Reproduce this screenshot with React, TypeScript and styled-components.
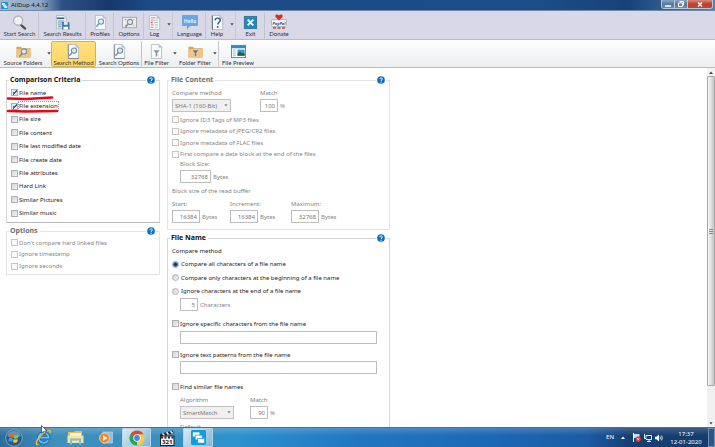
import React from "react";
import styled, { createGlobalStyle, css } from "styled-components";

const GlobalStyle = createGlobalStyle`
  *, *::before, *::after { box-sizing: border-box; }
  html, body, #root { height: 100%; }
  body { margin: 0; overflow: hidden; background: #fff; }
  body, button, input, select {
    font-family: "Noto Sans", "Open Sans", sans-serif;
    font-size: 6px;
    line-height: 8px;
    color: #222;
  }
  svg { display: block; }
`;

const Window = styled.div`
  display: flex;
  flex-direction: column;
  height: 100vh;
`;

/* ---------- title bar ---------- */

const TitleBar = styled.header`
  display: flex;
  align-items: flex-start;
  height: 11px;
  flex: none;
  background: linear-gradient(90deg, #a3b8d0 0, #8fa9c6 40px, #2c5283 62px, #16396b 110px, #1c4b86 150px, #1c4d88 75%, #174377 88%, #5680ab 100%);
  border-bottom: 1px solid #6f87a8;
`;

const AppTitle = styled.h1`
  display: flex;
  align-items: center;
  gap: 3px;
  margin: 0;
  padding: 1px 0 0 1px;
  font-size: 6px;
  line-height: 8px;
  font-weight: 400;
  color: #0b1420;
  flex: 1;
`;

const CaptionButtons = styled.div`
  display: flex;
  margin-right: 2px;
  border: 1px solid #b8c8da;
  border-top: 0;
  border-radius: 0 0 3px 3px;
  overflow: hidden;
`;

const CaptionButton = styled.button<{ $close?: boolean }>`
  display: grid;
  place-items: center;
  width: ${(p) => (p.$close ? 24 : 13)}px;
  height: 8px;
  padding: 0;
  border: 0;
  border-right: ${(p) => (p.$close ? "0" : "1px solid #b8c8da")};
  background: ${(p) =>
    p.$close ? "linear-gradient(#d98a80, #b8402f 50%, #c8442f)" : "linear-gradient(#8ea8c4, #54789f 50%, #6b8db2)"};
`;

/* ---------- toolbars ---------- */

const Toolbar = styled.nav<{ $light?: boolean }>`
  display: flex;
  flex: none;
  height: ${(p) => (p.$light ? 28 : 29)}px;
  background: ${(p) => (p.$light ? "linear-gradient(#fefefe, #eceef0)" : "#d9d8e6")};
  border-bottom: 1px solid #bcbcc0;
  padding-top: 1px;
`;

const Tool = styled.button<{ $w: number; $active?: boolean; $sep?: boolean }>`
  display: flex;
  flex-direction: column;
  align-items: center;
  flex: none;
  width: ${(p) => p.$w}px;
  padding: 1px 0 0;
  border: 1px solid transparent;
  background: none;
  white-space: nowrap;
  color: #33333c;
  ${(p) =>
    p.$sep &&
    css`
      border-right-color: #c3c3cf;
    `}
  ${(p) =>
    p.$active &&
    css`
      border-color: #d9b04c;
      border-radius: 2px;
      background: linear-gradient(#ffe07e, #ffd662);
    `}
`;

const ToolIcon = styled.span`
  display: grid;
  place-items: center;
  width: 16px;
  height: 16px;
  flex: none;
`;

const ToolLabel = styled.span`
  font-family: Lato, "Open Sans", sans-serif;
  line-height: 8px;
`;

const DropArrow = styled.button<{ $w: number; $sep?: boolean }>`
  display: grid;
  place-items: start center;
  flex: none;
  width: ${(p) => p.$w}px;
  padding: 11px 0 0;
  border: 0;
  border-right: ${(p) => (p.$sep ? "1px solid #c9c9d2" : "0")};
  background: none;
`;

/* ---------- body ---------- */

const Body = styled.main`
  display: flex;
  flex: 1;
  min-height: 0;
  background: #fff;
`;

const Content = styled.div`
  display: grid;
  grid-template-columns: minmax(0, 154fr) minmax(0, 223fr);
  column-gap: 7px;
  align-items: start;
  flex: 0 1 390px;
  padding: 7px 0 0 6px;
  overflow: hidden;
  height: 100%;
`;

const Spacer = styled.div`
  flex: 1;
`;

const Column = styled.div`
  display: flex;
  flex-direction: column;
`;

const Group = styled.section<{ $muted?: boolean }>`
  margin-top: 5px;
  padding-bottom: 2px;
  color: ${(p) => (p.$muted ? "#858585" : "#222")};
  border: 1px solid ${(p) => (p.$muted ? "#e4e4e4" : "#d6d6d6")};
  border-bottom-color: ${(p) => (p.$muted ? "#e0e0e0" : "#b8b8b8")};
`;

const GroupHead = styled.div`
  display: flex;
  align-items: center;
  justify-content: space-between;
  height: 10px;
  margin-top: -6px;
  padding: 0 3px 0 2px;
`;

const GroupTitle = styled.h2<{ $muted?: boolean }>`
  margin: 0;
  padding: 0 2px 0 1px;
  background: #fff;
  font-family: "Open Sans", "Noto Sans", sans-serif;
  font-size: 7px;
  line-height: 10px;
  font-weight: 700;
  white-space: nowrap;
  color: ${(p) => (p.$muted ? "#6e6e6e" : "#111")};
`;

const HelpButton = styled.button`
  display: grid;
  place-items: center;
  padding: 0 1px;
  border: 0;
  background: #fff;
`;

const CheckGrid = styled.div<{ $h: number }>`
  display: grid;
  grid-auto-rows: 1fr;
  align-items: center;
  height: ${(p) => p.$h}px;
  padding-left: 4px;
`;

const OptionLabel = styled.label`
  position: relative;
  display: flex;
  align-items: center;
  gap: 1px;
  line-height: 8px;
  white-space: nowrap;
`;

const OptionText = styled.span<{ $focus?: boolean }>`
  outline: ${(p) => (p.$focus ? "1px dotted #999" : "none")};
`;

const Box = styled.input`
  appearance: none;
  flex: none;
  width: 7px;
  height: 7px;
  margin: 0;
  border: 1px solid #b0b0b4;
  background: linear-gradient(135deg, #d2d3d6, #f4f4f4);

  &:disabled {
    border-color: #c6c6c6;
    background: #fafafa;
  }
  &[type="radio"] {
    border-radius: 50%;
    margin-right: 1px;
  }
  &[type="radio"]:checked {
    border-color: #8fa3b6;
    background: radial-gradient(circle, #103a63 0 1px, #3a7aae 2px, #dbe6ee 3px);
  }
  &[type="checkbox"]:checked {
    background:
      linear-gradient(#5573a4, #5573a4) 1px 2px / 1px 2px no-repeat,
      linear-gradient(135deg, transparent 38%, #3c5c92 38% 62%, transparent 62%) 1px 0 / 4px 5px no-repeat,
      #e2e8f0;
  }
`;

const RedStroke = styled.svg`
  position: absolute;
  left: -5px;
  top: 6px;
  z-index: 1;
  pointer-events: none;
`;

const Stack = styled.div<{ $indent?: boolean }>`
  display: flex;
  flex-direction: column;
  align-items: flex-start;
  padding: 0 12px 0 ${(p) => (p.$indent ? 12 : 4)}px;
`;

const Line = styled.div<{ $h: number }>`
  display: flex;
  align-items: center;
  width: 100%;
  height: ${(p) => p.$h}px;
`;

const FieldRow = styled.div<{ $cols: string; $indent?: boolean }>`
  display: grid;
  grid-template-columns: ${(p) => p.$cols};
  padding-left: ${(p) => (p.$indent ? 12 : 4)}px;
`;

const Field = styled.div`
  display: flex;
  flex-direction: column;
  align-items: flex-start;
  gap: 2px;
`;

const FieldLabel = styled.label`
  line-height: 8px;
  white-space: nowrap;
`;

const Inline = styled.div`
  display: flex;
  align-items: center;
  gap: 2px;
  color: #858585;
`;

const TextBox = styled.input<{ $w?: number }>`
  width: ${(p) => (p.$w ? `${p.$w}px` : "100%")};
  height: 13px;
  padding: 0 2px;
  border: 1px solid #bdbdbd;
  background: #fff;
  color: #777;
  text-align: right;
  outline: none;
`;

const SelectWrap = styled.span<{ $w: number }>`
  position: relative;
  display: block;
  width: ${(p) => p.$w}px;
  & > svg {
    position: absolute;
    right: 3px;
    top: 5px;
    pointer-events: none;
  }
`;

const Select = styled.select`
  appearance: none;
  display: block;
  width: 100%;
  height: 13px;
  padding: 0 0 0 2px;
  border: 1px solid #c2c2c2;
  border-radius: 0;
  background: #f0f0f0;
  color: #777;
  opacity: 1;
`;

/* ---------- scroll bar ---------- */

const ScrollBar = styled.div`
  display: flex;
  flex-direction: column;
  width: 8px;
  flex: none;
  background: #f0f0f0;
`;

const ScrollArrow = styled.button`
  display: grid;
  place-items: center;
  height: 8px;
  padding: 0;
  border: 0;
  background: #f2f2f2;
`;

const ScrollTrack = styled.div`
  flex: 1;
  display: grid;
  grid-template-rows: 310fr 33fr;
`;

const ScrollThumb = styled.div`
  display: grid;
  place-items: center;
  border: 1px solid #a9a9a9;
  border-radius: 1px;
  background: linear-gradient(90deg, #f6f6f6, #e2e2e2 45%, #c4c4c6);
`;

/* ---------- task bar ---------- */

const TaskBar = styled.footer`
  display: flex;
  align-items: stretch;
  flex: none;
  height: 20px;
  border-top: 1px solid #4d6e8c;
  background: linear-gradient(rgba(255, 255, 255, 0.18), rgba(255, 255, 255, 0) 40%),
    linear-gradient(90deg, #2c6f9f 0, #3f90bd 8%, #398fc0 22%, #2d92cd 33%, #2277c0 50%, #1d68b4 68%, #1b5ca4 82%, #153f73 88%, #143c6c 100%);
  color: #fff;
`;

const TaskButton = styled.button<{ $w: number; $open?: boolean }>`
  display: grid;
  place-items: center;
  width: ${(p) => p.$w}px;
  flex: none;
  padding: 0;
  border: 1px solid ${(p) => (p.$open ? "#b7d6e8" : "transparent")};
  border-radius: 1px;
  background: ${(p) => (p.$open ? "linear-gradient(135deg, #d9ebf4, #7fb6d6)" : "none")};
`;

const Tray = styled.div`
  display: flex;
  align-items: center;
  gap: 1px;
  margin-left: auto;
`;

const TrayIcons = styled.div`
  display: flex;
  align-items: center;
  gap: 3px;
  padding-right: 1px;
`;

const Expander = styled.button`
  display: grid;
  place-items: center;
  width: 12px;
  height: 12px;
  padding: 0;
  border: 0;
  background: none;
`;

const Language = styled.span`
  padding: 0 2px 2px 0;
`;

const Clock = styled.time`
  width: 42px;
  text-align: center;
  line-height: 8px;
`;

const ShowDesktop = styled.button`
  width: 7px;
  align-self: stretch;
  padding: 0;
  border: 1px solid #6d8fb4;
  background: #2a578a;
`;

const Pointer = styled.svg`
  position: fixed;
  left: 41px;
  bottom: 12px;
  z-index: 5;
  pointer-events: none;
`;

/* ---------- icons ---------- */

const Down = ({ color = "#444" }: { color?: string }) => (
  <svg width="4" height="3" viewBox="0 0 4 3" aria-hidden="true">
    <path d="M.3.3h3.400L2 2.400z" fill={color} />
  </svg>
);

const Logo = ({ size }: { size: number }) => (
  <svg width={size} height={size} viewBox="0 0 16 16" aria-hidden="true">
    <rect width="16" height="16" rx="1.500" fill="#159bdc" />
    <rect x="2" y="2.500" width="7" height="4.500" fill="#fff" />
    <path d="M4.500 5.500h7.500v5h-7.500z" fill="#fff" stroke="#159bdc" strokeWidth=".8" />
    <path d="M7 9h7.500v5H7z" fill="#fff" stroke="#159bdc" strokeWidth=".8" />
  </svg>
);

const Help = () => (
  <svg width="8" height="8" viewBox="0 0 16 16" aria-hidden="true">
    <circle cx="8" cy="8" r="7.700" fill="#0b70c4" />
    <path d="M5.500 6.200C5.500 3 10.700 3 10.700 6c0 2-2.600 2-2.600 4" fill="none" stroke="#fff" strokeWidth="1.900" />
    <circle cx="8.100" cy="12.300" r="1.200" fill="#fff" />
  </svg>
);

const Page = () => (
  <>
    <path d="M2.500.5h8l3 3v12h-11z" fill="#f6f9fb" stroke="#a9b2ba" strokeWidth=".8" />
    <path d="M10.500.5v3h3z" fill="#c8d0d6" stroke="#a9b2ba" strokeWidth=".6" />
  </>
);

const Lens = ({ x = 0, y = 0, color = "#6f9cc0" }: { x?: number; y?: number; color?: string }) => (
  <g transform={`translate(${x} ${y})`}>
    <circle cx="8.500" cy="7" r="2.800" fill="#dcebf6" stroke={color} strokeWidth="1.200" />
    <path d="M6.500 9.200L4 12" stroke={color} strokeWidth="1.600" strokeLinecap="round" />
  </g>
);

const Folder = () => (
  <>
    <path d="M.5 3h5l1 1.500h9V14.500H.5z" fill="#d9a557" />
    <path d="M.5 5.500h15v9H.5z" fill="#f2c680" />
  </>
);

const Funnel = ({ color = "#8b8f94" }: { color?: string }) => (
  <path d="M4.500 6.500h7L9 9.500V13l-2 .8V9.500z" fill={color} stroke="#fff" strokeWidth=".4" />
);

const drawings: Record<string, React.ReactNode> = {
  search: (
    <>
      <path d="M9.500 10.500l4.500 4" stroke="#4c4e52" strokeWidth="2.400" strokeLinecap="round" />
      <circle cx="6.500" cy="6" r="4.900" fill="#eef0f3" stroke="#b2b3b8" strokeWidth="1.400" />
      <path d="M3.800 5.500C4.300 3.800 6 3 7.500 3.400" fill="none" stroke="#fff" strokeWidth="1.200" />
    </>
  ),
  results: (
    <>
      <path d="M1.500.5h8l2.500 2.500v11.500H1.500z" fill="#eef3f6" stroke="#9aa8b2" strokeWidth=".7" />
      <path d="M2 3.500h8" stroke="#2c6a94" strokeWidth="1.800" />
      <path d="M3 6.500h7M3 8.500h7M3 10.500h4M3 12.500h4" stroke="#5e7e94" strokeWidth=".9" />
      <path d="M7.500 7.500h7l1 1v7h-8z" fill="#3d79a8" />
      <path d="M9.500 7.500h4v3h-4z" fill="#e6eef4" />
      <path d="M9 12.500h5v3H9z" fill="#fff" />
    </>
  ),
  profiles: <><Page /><Lens /></>,
  options: (
    <>
      <rect x=".5" y="2.500" width="15" height="11" fill="#ededf0" stroke="#a5a6ab" />
      <path d="M3 5h2M3 11h2M12 5h1M12 11h1" stroke="#999" />
      <Lens y={0.5} color="#8a8f96" />
    </>
  ),
  log: (
    <>
      <Page />
      <path d="M4 3h5M4 5.500h3M4 10.500h3M4 13h3" stroke="#d77a6f" strokeWidth="1" />
      <path d="M4 8h2" stroke="#d8433a" strokeWidth="1.600" />
      <path d="M7.500 5.500h4M7.500 8h4M8.500 10.500h3M8.500 13h3" stroke="#aeb4ba" strokeWidth="1" />
    </>
  ),
  help: (
    <>
      <Page />
      <path d="M2.500.5v15" stroke="#54687a" />
      <path d="M5.500 5.500C5.500 2.600 11 2.500 11 5.500c0 2.200-2.800 2.200-2.800 4.700" fill="none" stroke="#24587e" strokeWidth="1.500" />
      <circle cx="8.200" cy="12.700" r="1" fill="#24587e" />
    </>
  ),
  exit: (
    <>
      <rect x="1.500" y="1.500" width="13" height="13" fill="#1a8cbe" stroke="#3a7391" />
      <path d="M5 5l6 6M11 5l-6 6" stroke="#fff" strokeWidth="2" />
    </>
  ),
  method: (
    <>
      <Page />
      <path d="M2.500.5v15h11" fill="none" stroke="#7b8791" />
      <Lens color="#7291ab" />
    </>
  ),
  source: <><Folder /><Lens y={1} color="#7c8f9e" /></>,
  filefilter: <><Page /><Funnel /></>,
  folderfilter: <><Folder /><Funnel color="#7b6d5b" /></>,
  preview: (
    <>
      <rect x=".5" y="1.500" width="15" height="13" fill="#f5fafc" stroke="#4591b5" />
      <path d="M0 3h16" stroke="#2d8ec0" strokeWidth="3" />
      <path d="M2 6.500h3M2 8.500h3M2 10.500h3M2 12.500h3" stroke="#8ab2c8" strokeWidth=".8" />
      <rect x="7" y="6" width="7.500" height="6.500" fill="#3c94cf" />
      <path d="M7 12.500V10l2.500-2 2 2 1.500-1 1.500 1.500v2z" fill="#255f36" />
    </>
  ),
};

const Icon = ({ name }: { name: string }) => (
  <svg width="15" height="15" viewBox="0 0 16 16" aria-hidden="true">{drawings[name]}</svg>
);

const HelloBubble = () => (
  <svg width="16" height="15" viewBox="0 0 16 15" aria-hidden="true">
    <path d="M1 0h14q1 0 1 1v9q0 1-1 1H8l-3 3.500V11H1q-1 0-1-1V1q0-1 1-1z" fill="#69a6e8" />
    <text x="8" y="7.500" textAnchor="middle" fontSize="5" fontWeight="600" fill="#f3f9ff">Hello</text>
  </svg>
);

const PayPal = () => (
  <svg width="16" height="16" viewBox="0 0 16 16" aria-hidden="true">
    <rect x=".5" y="5.500" width="15" height="7" rx="1" fill="#eef2f6" stroke="#9ba5b0" strokeWidth=".7" />
    <path d="M8 6.500L4.500 3C3.500.5 6.500-.5 8 1.500 9.500-.5 12.500.5 11.500 3z" fill="#d62d27" />
    <text x="8" y="11" textAnchor="middle" fontSize="4" fontWeight="700" fontStyle="italic" fill="#274b75">PayPal</text>
    <path d="M2 14h3M6.500 14h3M11 14h3" stroke="#c46b5d" strokeWidth="2" />
  </svg>
);

/* ---------- pieces ---------- */

const ToolButton = (p: { label: string; w: number; sep?: boolean; active?: boolean; children: React.ReactNode }) => (
  <Tool type="button" $w={p.w} $sep={p.sep} $active={p.active}>
    <ToolIcon>{p.children}</ToolIcon>
    <ToolLabel>{p.label}</ToolLabel>
  </Tool>
);

const Drop = ({ w, sep, label }: { w: number; sep?: boolean; label: string }) => (
  <DropArrow type="button" $w={w} $sep={sep} aria-label={label}><Down /></DropArrow>
);

const Panel = ({ title, muted, children }: { title: string; muted?: boolean; children: React.ReactNode }) => (
  <Group $muted={muted} aria-label={title}>
    <GroupHead>
      <GroupTitle $muted={muted}>{title}</GroupTitle>
      <HelpButton type="button" aria-label={`Help: ${title}`}><Help /></HelpButton>
    </GroupHead>
    {children}
  </Group>
);

type OptionProps = {
  text: string;
  checked?: boolean;
  disabled?: boolean;
  radio?: string;
  focus?: boolean;
  stroke?: string;
};

const Option = ({ text, checked, disabled, radio, focus, stroke }: OptionProps) => (
  <OptionLabel>
    <Box type={radio ? "radio" : "checkbox"} name={radio} defaultChecked={checked} disabled={disabled} />
    <OptionText $focus={focus}>{text}</OptionText>
    {stroke && (
      <RedStroke width="54" height="7" viewBox="0 0 54 7" aria-hidden="true">
        <path d={stroke} fill="none" stroke="#e8061b" strokeWidth="2.600" strokeLinecap="round" />
      </RedStroke>
    )}
  </OptionLabel>
);

const NumberField = (p: { id: string; label?: string; value: string; w: number; unit: string }) => (
  <Field>
    {p.label && <FieldLabel htmlFor={p.id}>{p.label}</FieldLabel>}
    <Inline>
      <TextBox id={p.id} $w={p.w} defaultValue={p.value} disabled aria-label={p.label ?? p.unit} />
      <span>{p.unit}</span>
    </Inline>
  </Field>
);

const SelectField = (p: { id: string; label: string; value: string; w: number }) => (
  <Field>
    <FieldLabel htmlFor={p.id}>{p.label}</FieldLabel>
    <SelectWrap $w={p.w}>
      <Select id={p.id} disabled defaultValue={p.value}><option>{p.value}</option></Select>
      <Down color="#888" />
    </SelectWrap>
  </Field>
);

const Muted = styled.div`
  color: #808080;
`;

const Gap = styled.div<{ $h: number }>`
  height: ${(p) => p.$h}px;
  flex: none;
`;

const criteria: OptionProps[] = [
  { text: "File name", checked: true, stroke: "M2 3.500L20 4 46 2.500" },
  { text: "File extension", checked: true, focus: true, stroke: "M2 3L20 3.500 51 3" },
  { text: "File size" },
  { text: "File content" },
  { text: "File last modified date" },
  { text: "File create date" },
  { text: "File attributes" },
  { text: "Hard Link" },
  { text: "Similar Pictures" },
  { text: "Similar music" },
];

export default function App() {
  return (
    <Window>
      <GlobalStyle />
      <TitleBar>
        <AppTitle><Logo size={7} />AllDup 4.4.12</AppTitle>
        <CaptionButtons>
          <CaptionButton type="button" aria-label="Minimize">
            <svg width="6" height="5" viewBox="0 0 6 5"><path d="M0 4h6" stroke="#fff" strokeWidth="1.500" /></svg>
          </CaptionButton>
          <CaptionButton type="button" aria-label="Restore">
            <svg width="6" height="6" viewBox="0 0 6 6"><path d="M2 1.500V.5h3.500v3.500h-1M.5 2h4v3.500h-4z" fill="none" stroke="#fff" /></svg>
          </CaptionButton>
          <CaptionButton type="button" $close aria-label="Close">
            <svg width="6" height="5" viewBox="0 0 6 5"><path d="M1 .5l4 4M5 .5l-4 4" stroke="#fff" strokeWidth="1.500" /></svg>
          </CaptionButton>
        </CaptionButtons>
      </TitleBar>

      <Toolbar aria-label="Main">
        <ToolButton label="Start Search" w={39} sep><Icon name="search" /></ToolButton>
        <ToolButton label="Search Results" w={47} sep><Icon name="results" /></ToolButton>
        <ToolButton label="Profiles" w={28} sep><Icon name="profiles" /></ToolButton>
        <ToolButton label="Options" w={30} sep><Icon name="options" /></ToolButton>
        <ToolButton label="Log" w={21}><Icon name="log" /></ToolButton>
        <Drop w={8} sep label="Log menu" />
        <ToolButton label="Language" w={33} sep><HelloBubble /></ToolButton>
        <ToolButton label="Help" w={22}><Icon name="help" /></ToolButton>
        <Drop w={8} sep label="Help menu" />
        <ToolButton label="Exit" w={29} sep><Icon name="exit" /></ToolButton>
        <ToolButton label="Donate" w={28}><PayPal /></ToolButton>
      </Toolbar>

      <Toolbar $light aria-label="Views">
        <ToolButton label="Source Folders" w={46}><Icon name="source" /></ToolButton>
        <Drop w={5} label="Source Folders menu" />
        <ToolButton label="Search Method" w={45} active><Icon name="method" /></ToolButton>
        <ToolButton label="Search Options" w={46} sep><Icon name="method" /></ToolButton>
        <ToolButton label="File Filter" w={29}><Icon name="filefilter" /></ToolButton>
        <Drop w={7} label="File Filter menu" />
        <ToolButton label="Folder Filter" w={34}><Icon name="folderfilter" /></ToolButton>
        <Drop w={7} sep label="Folder Filter menu" />
        <ToolButton label="File Preview" w={38}><Icon name="preview" /></ToolButton>
      </Toolbar>

      <Body>
        <Content>
          <Column>
            <Panel title="Comparison Criteria">
              <Gap $h={1} />
              <CheckGrid $h={134}>
                {criteria.map((c) => <Option key={c.text} {...c} />)}
              </CheckGrid>
            </Panel>
            <Gap $h={3} />
            <Panel title="Options" muted>
              <Gap $h={1} />
              <CheckGrid $h={35}>
                <Option text="Don't compare hard linked files" disabled />
                <Option text="Ignore timestamp" disabled />
                <Option text="Ignore seconds" disabled />
              </CheckGrid>
            </Panel>
          </Column>

          <Column>
            <Panel title="File Content" muted>
              <Gap $h={4} />
              <FieldRow $cols="88px 1fr">
                <SelectField id="hash" label="Compare method" value="SHA-1 (160-Bit)" w={59} />
                <NumberField id="match" label="Match" value="100" w={18} unit="%" />
              </FieldRow>
              <Gap $h={2} />
              <CheckGrid $h={46}>
                <Option text="Ignore ID3 Tags of MP3 files" disabled />
                <Option text="Ignore metadata of JPEG/CR2 files" disabled />
                <Option text="Ignore metadata of FLAC files" disabled />
                <Option text="First compare a data block at the end of the files" disabled />
              </CheckGrid>
              <FieldRow $cols="1fr" $indent>
                <NumberField id="block" label="Block Size:" value="32768" w={31} unit="Bytes" />
              </FieldRow>
              <Gap $h={3} />
              <Stack><Line $h={10}>Block size of the read buffer</Line></Stack>
              <Gap $h={4} />
              <FieldRow $cols="58px 61px 1fr">
                <NumberField id="start" label="Start:" value="16384" w={28} unit="Bytes" />
                <NumberField id="increment" label="Increment:" value="16384" w={28} unit="Bytes" />
                <NumberField id="maximum" label="Maximum:" value="32768" w={28} unit="Bytes" />
              </FieldRow>
              <Gap $h={4} />
            </Panel>
            <Gap $h={3} />
            <Panel title="File Name">
              <Gap $h={3} />
              <Stack>
                <Line $h={10}>Compare method</Line>
                <Gap $h={1} />
                <Line $h={14}><Option radio="compare" text="Compare all characters of a file name" checked /></Line>
                <Line $h={13}><Option radio="compare" text="Compare only characters at the beginning of a file name" /></Line>
                <Line $h={14}><Option radio="compare" text="Ignore characters at the end of a file name" /></Line>
              </Stack>
              <FieldRow $cols="1fr" $indent>
                <NumberField id="chars" value="5" w={18} unit="Characters" />
              </FieldRow>
              <Gap $h={6} />
              <Stack><Line $h={13}><Option text="Ignore specific characters from the file name" /></Line></Stack>
              <Gap $h={1} />
              <Stack $indent><TextBox aria-label="Characters to ignore" /></Stack>
              <Gap $h={4} />
              <Stack><Line $h={13}><Option text="Ignore text patterns from the file name" /></Line></Stack>
              <Stack $indent><TextBox aria-label="Text patterns to ignore" /></Stack>
              <Gap $h={6} />
              <Stack><Line $h={13}><Option text="Find similar file names" /></Line></Stack>
              <Gap $h={3} />
              <Muted>
                <FieldRow $cols="70px 1fr" $indent>
                  <SelectField id="algorithm" label="Algorithm" value="SmartMatch" w={54} />
                  <NumberField id="similar" label="Match" value="90" w={18} unit="%" />
                </FieldRow>
                <Gap $h={4} />
                <Stack $indent><Line $h={8}>Default</Line></Stack>
              </Muted>
            </Panel>
          </Column>
        </Content>
        <Spacer />
        <ScrollBar>
          <ScrollArrow type="button" aria-label="Scroll up">
            <svg width="4" height="3" viewBox="0 0 4 3"><path d="M0 3h4L2 .5z" fill="#444" /></svg>
          </ScrollArrow>
          <ScrollTrack>
            <ScrollThumb>
              <svg width="4" height="5" viewBox="0 0 4 5"><path d="M0 .5h4M0 2.500h4M0 4.500h4" stroke="#888" /></svg>
            </ScrollThumb>
          </ScrollTrack>
          <ScrollArrow type="button" aria-label="Scroll down"><Down /></ScrollArrow>
        </ScrollBar>
      </Body>

      <TaskBar>
        <TaskButton type="button" $w={27} aria-label="Start">
          <svg width="18" height="18" viewBox="0 0 18 18">
            <circle cx="9" cy="9" r="8.300" fill="#245a86" stroke="#86b4d0" strokeWidth=".8" />
            <path d="M2 7a7.300 7.300 0 0 1 14 0q-7 3-14 0z" fill="#8fb8d2" opacity=".6" />
            <path d="M4.500 5.500q2-1.500 4 0L8 8.700q-2-1.300-4 0z" fill="#e9622c" />
            <path d="M9.300 5.800q2 1.200 4.200 0L13 9q-2 1.300-4.200.200z" fill="#8cc540" />
            <path d="M3.800 9.500q2-1.300 4 0l-.5 3.300q-2-1.300-4 0z" fill="#3ba0e6" />
            <path d="M8.600 9.900q2 1.200 4.200 0l-.5 3.200q-2 1.300-4.200.200z" fill="#fbc52d" />
          </svg>
        </TaskButton>
        <TaskButton type="button" $w={33} aria-label="Internet Explorer">
          <svg width="17" height="17" viewBox="0 0 17 17">
            <path d="M13 11.500A5 5 0 1 1 13.700 8.700H5" fill="none" stroke="#175fa9" strokeWidth="3.200" />
            <path d="M13 11.500A5 5 0 1 1 13.700 8.700H5" fill="none" stroke="#65c3f0" strokeWidth="1.800" />
            <path d="M3.500 15.500C-1 16.500 2 9 8 4.500 12 1.500 16.500 0 15 4" fill="none" stroke="#f0bd3c" strokeWidth="1.400" />
          </svg>
        </TaskButton>
        <TaskButton type="button" $w={30} aria-label="Explorer">
          <svg width="17" height="15" viewBox="0 0 17 15">
            <path d="M1 2h6l1-1h7v12H1z" fill="#e5bf5c" />
            <path d="M3 3h11v5H3z" fill="#fff6cf" />
            <path d="M.5 5.500h16V13H.5z" fill="#f8e39a" />
            <path d="M4 14.500V9.500h9v5" fill="none" stroke="#79bfe2" strokeWidth="2" />
          </svg>
        </TaskButton>
        <TaskButton type="button" $w={32} aria-label="Media Player">
          <svg width="14" height="14" viewBox="0 0 14 14">
            <rect x="4" y="1" width="9.500" height="11" fill="#8fc1df" stroke="#bcdced" strokeWidth=".6" />
            <circle cx="5.500" cy="7" r="5" fill="#f2862b" stroke="#f8d9bd" strokeWidth=".8" />
            <path d="M4 4.300v5.400L8.500 7z" fill="#fff" />
          </svg>
        </TaskButton>
        <TaskButton type="button" $w={29} $open aria-label="Chrome">
          <svg width="16" height="16" viewBox="0 0 16 16">
            <path d="M8 8L1.500 4.250A7.500 7.500 0 0 1 14.500 4.250z" fill="#df4737" />
            <path d="M8 8L14.500 4.250A7.500 7.500 0 0 1 8 15.500z" fill="#fcca3f" />
            <path d="M8 8V15.500A7.500 7.500 0 0 1 1.500 4.250z" fill="#2aa45a" />
            <path d="M8 4.250h6.500L11 10z" fill="#fcca3f" />
            <path d="M4.750 9.900L1.500 4.250 8 8z" fill="#2aa45a" />
            <circle cx="8" cy="8" r="3.700" fill="#fff" />
            <circle cx="8" cy="8" r="2.900" fill="#4587ee" />
          </svg>
        </TaskButton>
        <TaskButton type="button" $w={32} aria-label="Media Player Classic">
          <svg width="16" height="16" viewBox="0 0 16 16">
            <path d="M1 4L14 .5l.7 2.800L1.500 6.500z" fill="#222" />
            <path d="M3.500 3.500l2 2M7.500 2.300l2 2.200M11.500 1.300l2 2" stroke="#fff" strokeWidth="1.500" />
            <rect x="1.500" y="6" width="13.500" height="9.500" fill="#f2f2f2" stroke="#222" />
            <path d="M2 7.500h13" stroke="#222" strokeWidth="2" strokeDasharray="2 1.500" />
            <text x="8.200" y="14" textAnchor="middle" fontSize="6" fontWeight="700" fill="#223">321</text>
          </svg>
        </TaskButton>
        <TaskButton type="button" $w={30} $open aria-label="AllDup"><Logo size={15} /></TaskButton>

        <Tray>
          <Language>EN</Language>
          <TrayIcons>
            <Expander type="button" aria-label="Show hidden icons">
              <svg width="4" height="3" viewBox="0 0 4 3"><path d="M0 3h4L2 .5z" fill="#fff" /></svg>
            </Expander>
            <svg width="9" height="9" viewBox="0 0 9 9">
              <path d="M1.500 0v9" stroke="#fff" />
              <path d="M2 1h5.500v4H2z" fill="#cfdbe8" />
              <circle cx="6.200" cy="6.200" r="2.700" fill="#d8392e" />
              <path d="M5.200 5.200l2 2M7.200 5.200l-2 2" stroke="#fff" strokeWidth=".8" />
            </svg>
            <svg width="8" height="8" viewBox="0 0 8 8">
              <path d="M2 1.500h5.500v4H2zM3 7.500h4M5 5.500v2M.5 0v4.500H2" fill="none" stroke="#fff" strokeWidth=".9" />
            </svg>
            <svg width="8" height="8" viewBox="0 0 8 8">
              <path d="M0 2.700h1.500L4 .5v7L1.500 5.300H0z" fill="#fff" />
              <path d="M5 2.500q1 1.500 0 3M6.500 1.500q1.600 2.500 0 5" fill="none" stroke="#fff" strokeWidth=".8" />
            </svg>
          </TrayIcons>
          <Clock>17:37<br />12-01-2020</Clock>
          <ShowDesktop type="button" aria-label="Show desktop" />
        </Tray>
      </TaskBar>
      <Pointer width="7" height="10" viewBox="0 0 7 10" aria-hidden="true">
        <path d="M.5.5v7.500l2-1.500 1 3 1.300-.5-1-3H6z" fill="#fff" stroke="#333" strokeWidth=".7" />
      </Pointer>
    </Window>
  );
}
